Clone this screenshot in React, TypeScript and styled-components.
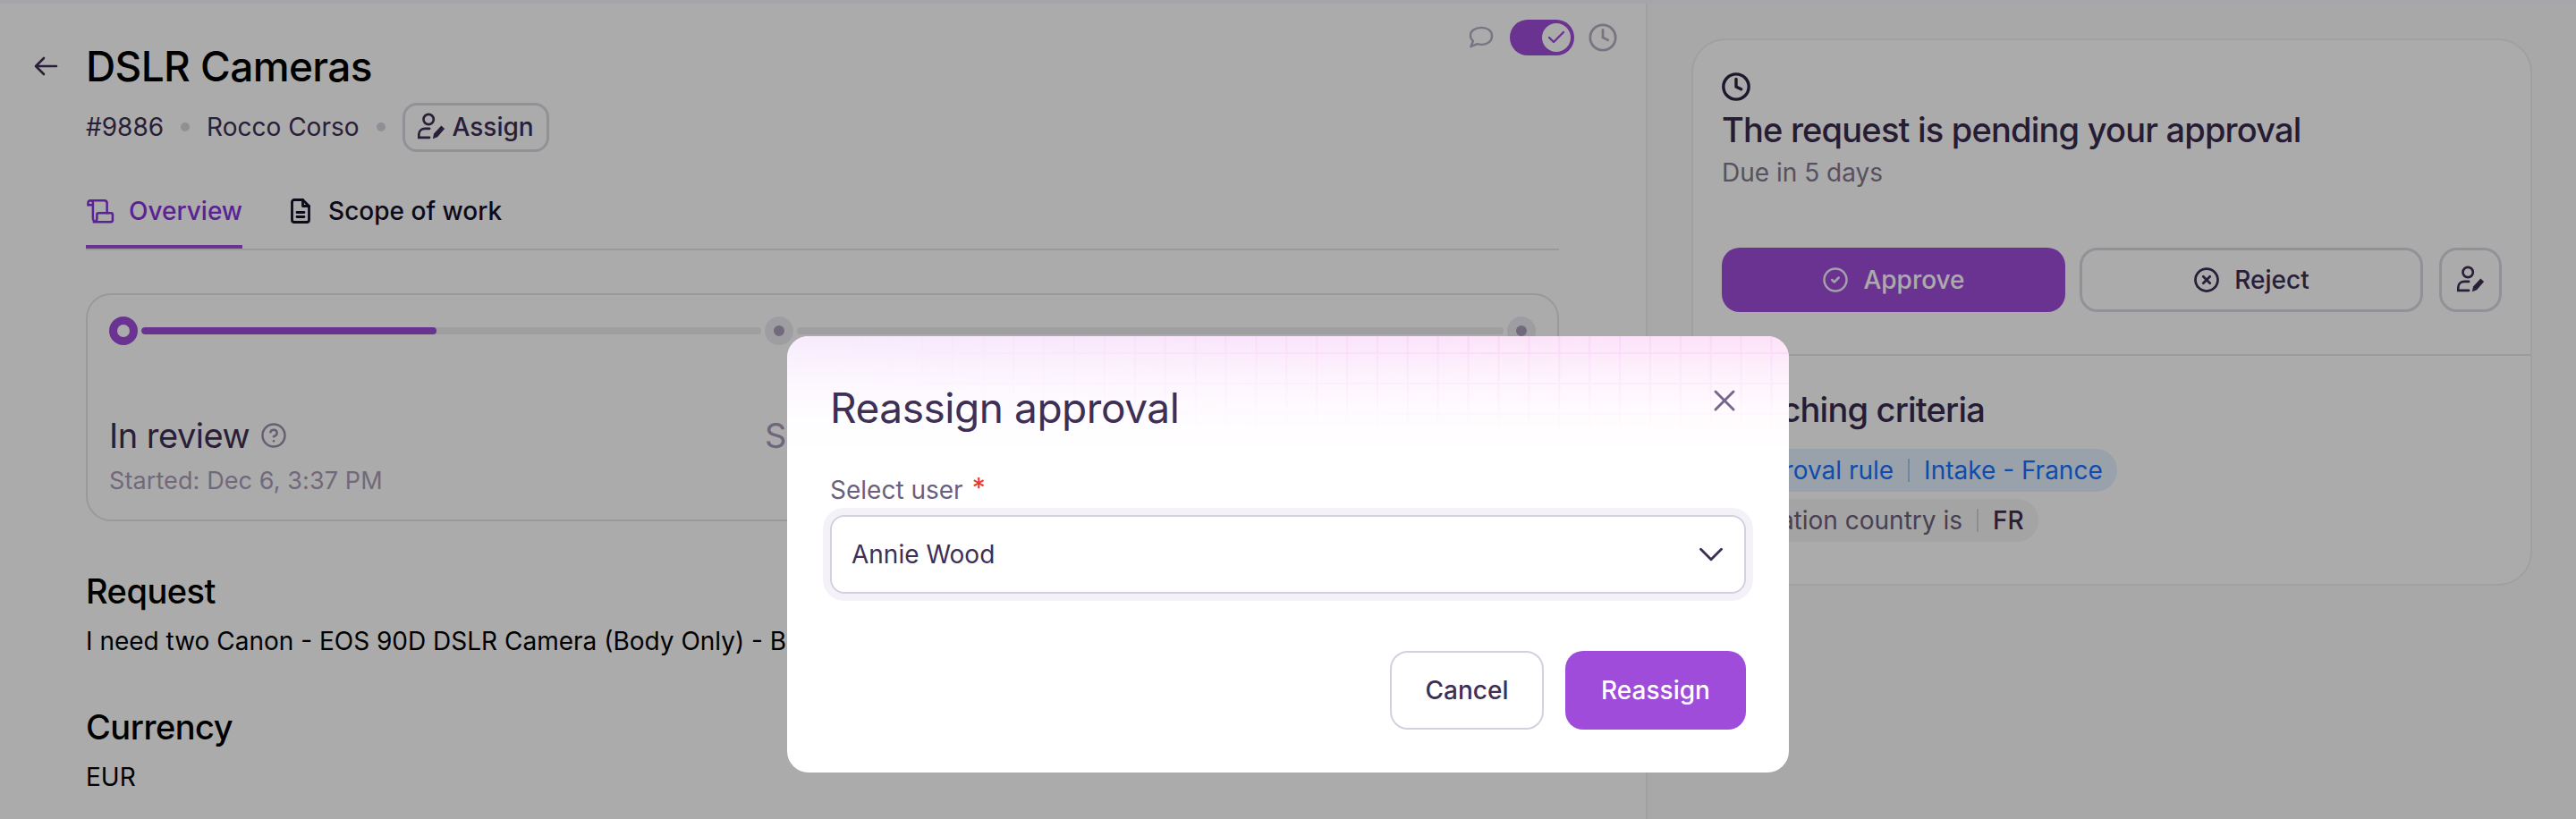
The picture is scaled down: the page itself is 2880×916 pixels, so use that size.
import styled, { createGlobalStyle } from "styled-components";
import { Check, ChevronDown, CircleCheck, CircleHelp, CircleX, Clock, X } from "lucide-react";

const GlobalStyle = createGlobalStyle`
    html, body {
        margin: 0;
        padding: 0;
        background: #fff;
    }
    * {
        box-sizing: border-box;
    }
    body {
        font-family: Inter, "Liberation Sans", sans-serif;
        color: #000;
    }
`;

const Page = styled.div`
    position: relative;
    display: flex;
    width: 2880px;
    height: 916px;
    overflow: hidden;
    padding-top: 4px;
    background: #f9f6fe;
`;

const Main = styled.main`
    width: 1842px;
    flex-shrink: 0;
    padding: 32px 97px 0 38px;
    border-right: 2px solid #f0eef3;
    background: #fff;
`;

const Header = styled.div`
    display: flex;
    align-items: center;
    gap: 31px;
    height: 76px;
    color: #3e2f55;
`;

const Title = styled.h1`
    margin: 0;
    font-size: 46px;
    font-weight: 500;
    letter-spacing: -0.6px;
    color: #000;
`;

const Content = styled.div`
    padding-left: 58px;
`;

const Meta = styled.div`
    display: flex;
    align-items: center;
    height: 56px;
    margin-top: 2px;
    font-size: 28px;
    color: #3e2f55;
`;

const Dot = styled.span`
    width: 10px;
    height: 10px;
    margin: 0 19px;
    border-radius: 50%;
    background: #d8d4df;
`;

const AssignButton = styled.button`
    display: flex;
    align-items: center;
    gap: 7px;
    height: 55px;
    padding: 0 14px 0 12px;
    border: 3px solid #dcd7e3;
    border-radius: 16px;
    background: #fff;
    color: #3e2f55;
    font: 450 28px Inter, sans-serif;
`;

const Tabs = styled.div`
    display: flex;
    gap: 54px;
    height: 110px;
    border-bottom: 2px solid #e8e5ec;
`;

const Tab = styled.div<{ $active?: boolean }>`
    display: flex;
    align-items: center;
    gap: ${(p) => (p.$active ? "16px" : "20px")};
    height: 108px;
    padding-top: 28px;
    border-bottom: 4px solid ${(p) => (p.$active ? "#9e4cd9" : "transparent")};
    color: ${(p) => (p.$active ? "#8734dc" : "#14102a")};
    font-size: 28px;
    font-weight: 500;
`;

const StepCard = styled.section`
    height: 255px;
    margin-top: 48px;
    padding: 24px 24px 0;
    border: 2px solid #e6e3ea;
    border-radius: 28px;
`;

const Track = styled.div`
    display: flex;
    align-items: center;
    gap: 4px;
    height: 32px;
`;

const Node = styled.span<{ $current?: boolean }>`
    flex-shrink: 0;
    width: 32px;
    height: 32px;
    border-style: solid;
    border-radius: 50%;
    border-width: ${(p) => (p.$current ? "9px" : "10px")};
    border-color: ${(p) => (p.$current ? "#9e4cd9" : "#eceaf0")};
    background: ${(p) => (p.$current ? "#fff" : "#aa9db9")};
`;

const Segment = styled.div<{ $width?: number }>`
    flex: ${(p) => (p.$width ? `0 0 ${p.$width}px` : "1")};
    height: 8px;
    border-radius: 4px;
    background: #eeedf0;
    overflow: hidden;
`;

const SegmentFill = styled.div`
    height: 100%;
    border-radius: 4px;
    background: #9e4cd9;
`;

const Steps = styled.div`
    display: grid;
    grid-template-columns: 733px 1fr;
    margin-top: 79px;
`;

const StepName = styled.div<{ $muted?: boolean }>`
    display: flex;
    align-items: center;
    gap: 12px;
    height: 44px;
    font-size: 38px;
    letter-spacing: -0.5px;
    color: ${(p) => (p.$muted ? "#a898ba" : "#3e2f55")};
`;

const HelpIcon = styled(CircleHelp)`
    width: 30px;
    height: 30px;
    color: #9b8fa9;
`;

const StepDate = styled.div`
    margin-top: 12px;
    font-size: 27px;
    line-height: 34px;
    letter-spacing: 0.1px;
    color: #a99db8;
`;

const Section = styled.section`
    margin-top: 56px;
`;

const SectionTitle = styled.h2`
    margin: 0;
    font-size: 38px;
    font-weight: 450;
    letter-spacing: -0.5px;
    line-height: 44px;
`;

const SectionText = styled.p`
    margin: 16px 0 0;
    font-size: 28px;
    line-height: 36px;
    white-space: nowrap;
`;

const Side = styled.aside`
    flex: 1;
    padding: 39px 49px 0 49px;
    background: #fbfbfb;
`;

const ApprovalCard = styled.section`
    height: 612px;
    border: 2px solid #efedf2;
    border-radius: 38px;
    background: #fff;
`;

const ApprovalTop = styled.div`
    height: 353px;
    padding: 35px 32px 0;
    border-bottom: 2px solid #e9e6ed;
`;

const ClockIcon = styled(Clock)`
    display: block;
    width: 34px;
    height: 34px;
    margin-left: -1px;
    color: #2f2340;
`;

const CardTitle = styled.h2`
    margin: 6px 0 0;
    font-size: 38px;
    font-weight: 450;
    line-height: 50px;
    letter-spacing: -0.8px;
    color: #3a2c50;
`;

const CardSubtitle = styled.div`
    margin-top: 5px;
    font-size: 28px;
    line-height: 36px;
    color: #83798f;
`;

const Actions = styled.div`
    display: flex;
    margin-top: 66px;
    gap: 16px;
`;

const ActionButton = styled.button<{ $primary?: boolean; $square?: boolean }>`
    display: flex;
    align-items: center;
    justify-content: center;
    gap: 16px;
    width: ${(p) => (p.$square ? "70px" : "384px")};
    height: 72px;
    margin-left: ${(p) => (p.$square ? "2px" : "0")};
    border: ${(p) => (p.$primary ? "0" : "3px solid #dcd7e3")};
    border-radius: 20px;
    background: ${(p) => (p.$primary ? "#9e4cd9" : "#fff")};
    color: ${(p) => (p.$primary ? "#fff" : "#3e2f55")};
    font: 450 28px Inter, sans-serif;
    svg {
        flex-shrink: 0;
        width: ${(p) => (p.$square ? "34px" : "30px")};
        height: ${(p) => (p.$square ? "34px" : "30px")};
        opacity: ${(p) => (p.$primary ? 0.9 : 1)};
    }
`;

const Criteria = styled.div`
    padding: 35px 32px 0;
`;

const CriteriaTitle = styled(CardTitle)`
    margin: 0;
`;

const Chip = styled.div<{ $blue?: boolean }>`
    display: flex;
    align-items: center;
    width: fit-content;
    height: 48px;
    margin-top: ${(p) => (p.$blue ? "19px" : "8px")};
    padding: 0 16px;
    border-radius: 24px;
    background: ${(p) => (p.$blue ? "#e5f0ff" : "#f5f5f6")};
    color: ${(p) => (p.$blue ? "#1772ff" : "#6d6079")};
    font-size: 28px;
`;

const ChipDivider = styled.span<{ $blue?: boolean }>`
    width: 2px;
    height: 26px;
    margin: 0 16px;
    background: ${(p) => (p.$blue ? "#a6c8f5" : "#d6d2da")};
`;

const ChipValue = styled.span<{ $blue?: boolean }>`
    color: ${(p) => (p.$blue ? "#1772ff" : "#3e2f55")};
    font-weight: ${(p) => (p.$blue ? 400 : 500)};
`;

const ViewSwitch = styled.div`
    position: absolute;
    top: 22px;
    left: 1642px;
    display: flex;
    align-items: center;
    gap: 18px;
    color: #b7adc2;
`;

const Toggle = styled.div`
    display: flex;
    align-items: center;
    justify-content: flex-end;
    width: 72px;
    height: 40px;
    margin-right: -3px;
    padding-right: 4px;
    border-radius: 20px;
    background: #9e4cd9;
`;

const ToggleKnob = styled.span`
    display: flex;
    align-items: center;
    justify-content: center;
    width: 32px;
    height: 32px;
    border-radius: 50%;
    background: #fff;
    color: #9e4cd9;
`;

const Overlay = styled.div`
    position: absolute;
    inset: 0;
    display: flex;
    align-items: flex-start;
    justify-content: center;
    padding-top: 376px;
    background: rgba(0, 0, 0, 0.33);
`;

const Modal = styled.div`
    position: relative;
    width: 1120px;
    height: 488px;
    overflow: hidden;
    border-radius: 24px;
    background: #fff;
`;

const ModalGlow = styled.div`
    position: absolute;
    inset: 0 0 auto 0;
    height: 130px;
    background: linear-gradient(90deg, #f7ebfd 0%, #fae4fb 50%, #fde2f8 100%);
    mask-image: linear-gradient(180deg, #000 0, rgba(0, 0, 0, 0.36) 52px, rgba(0, 0, 0, 0.14) 84px, transparent 130px);
`;

const ModalGrid = styled.div`
    position: absolute;
    inset: 0 0 auto 0;
    height: 110px;
    background-image:
        linear-gradient(90deg, #fad6fa 2px, transparent 2px),
        linear-gradient(180deg, #fad6fa 2px, transparent 2px);
    background-size: 33.9px 33.9px;
    background-position: 15px 18px;
    mask-image: linear-gradient(180deg, #000 0, rgba(0, 0, 0, 0.4) 30px, transparent 100%), linear-gradient(90deg, transparent 5%, #000 70%);
    mask-composite: intersect;
`;

const ModalBody = styled.div`
    position: relative;
    display: flex;
    flex-direction: column;
    height: 100%;
    padding: 50px 48px 48px;
`;

const ModalHeader = styled.div`
    display: flex;
    align-items: flex-start;
    justify-content: space-between;
`;

const ModalTitle = styled.h2`
    margin: 0;
    font-size: 46px;
    font-weight: 400;
    line-height: 60px;
    letter-spacing: -0.45px;
    color: #3e2f55;
`;

const CloseIcon = styled(X)`
    width: 40px;
    height: 40px;
    margin: 2px 4px 0 0;
    color: #76688a;
`;

const FieldLabel = styled.label`
    display: flex;
    align-items: flex-start;
    gap: 10px;
    height: 36px;
    margin-top: 44px;
    font-size: 28px;
    line-height: 36px;
    color: #6c5f7e;
`;

const Required = styled.span`
    color: #f0352b;
    font-size: 30px;
    line-height: 30px;
`;

const SelectRing = styled.div`
    margin: 2px -8px 0;
    padding: 8px;
    border-radius: 24px;
    background: #f4f2f8;
`;

const SelectBox = styled.div`
    display: flex;
    align-items: center;
    justify-content: space-between;
    height: 88px;
    padding: 0 14px 0 22px;
    border: 2px solid #d5d0e0;
    border-radius: 16px;
    background: #fff;
    font-size: 28px;
    color: #3e2f55;
`;

const ChevronIcon = styled(ChevronDown)`
    width: 46px;
    height: 46px;
    color: #3e2f55;
`;

const ModalFooter = styled.div`
    display: flex;
    justify-content: flex-end;
    gap: 24px;
    margin-top: auto;
`;

const ModalButton = styled.button<{ $primary?: boolean }>`
    width: ${(p) => (p.$primary ? "202px" : "172px")};
    height: 88px;
    border: ${(p) => (p.$primary ? "0" : "2px solid #d5d0e0")};
    border-radius: 20px;
    background: ${(p) => (p.$primary ? "#9e4cd9" : "#fff")};
    color: ${(p) => (p.$primary ? "#fff" : "#3e2f55")};
    font: 450 28px Inter, sans-serif;
`;

function BackArrow() {
    return (
        <svg width="27" height="22" viewBox="0 0 27 22" fill="none" stroke="currentColor" strokeWidth="2.6" strokeLinecap="round" strokeLinejoin="round">
            <path d="M2 11h23M11 2l-9 9 9 9" />
        </svg>
    );
}

// person with a pen at the lower right, used on both assign buttons
function AssignIcon() {
    return (
        <svg width="34" height="34" viewBox="0 0 36 36" fill="none">
            <circle cx="15" cy="9" r="6" stroke="currentColor" strokeWidth="2.8" />
            <path d="M16 20H11c-4.500 0-7.500 3-7.500 7v3.500H16" stroke="currentColor" strokeWidth="2.800" strokeLinecap="round" />
            <path d="M20 32l1.200-6L30 16.500l4 3.600L25.500 30z" fill="currentColor" />
        </svg>
    );
}

function ScrollIcon() {
    return (
        <svg width="32" height="27" viewBox="0 0 34 30" fill="none" stroke="currentColor" strokeWidth="2.800" strokeLinecap="round" strokeLinejoin="round">
            <path d="M2 7V4.500C2 2.800 3.200 1.500 5 1.500h17c2 0 3.500 1.500 3.500 3.500v12" />
            <path d="M2 7h6M5 1.500c2 0 3 1.300 3 3V23c0 2.500 1.500 5 4 5h18c1.600 0 2.500-1.200 2.500-2.500V19c0-1.200-.9-2-2-2H15c-1.200 0-2 .8-2 2v5c0 2.500-2 4-4 4" />
        </svg>
    );
}

function DocIcon() {
    return (
        <svg width="22" height="28" viewBox="0 0 22 28" fill="none" stroke="currentColor" strokeWidth="2.800" strokeLinecap="round" strokeLinejoin="round">
            <path d="M13.500 1.500H4C2.600 1.500 1.500 2.600 1.500 4v20c0 1.400 1.100 2.500 2.500 2.500h14c1.400 0 2.500-1.100 2.500-2.500V8.500z" />
            <path d="M13.500 1.500v7h7M7 15.500h8M7 20.500h8" />
        </svg>
    );
}

function ChatIcon() {
    return (
        <svg width="28" height="26" viewBox="0 0 30 28" fill="none" stroke="currentColor" strokeWidth="2.600" strokeLinejoin="round">
            <path d="M15.500 2C8 2 2 6 2 11.500c0 2.500 1.200 4.800 3.300 6.500L2.500 25l7.700-3.300c1.700.5 3.400.8 5.300.8 7 0 12.500-4.500 12.500-10.500S22.500 2 15.500 2z" />
        </svg>
    );
}

export default function App() {
    return (
        <Page>
            <GlobalStyle />
            <Main>
                <Header>
                    <BackArrow />
                    <Title>DSLR Cameras</Title>
                </Header>
                <Content>
                    <Meta>
                        #9886
                        <Dot />
                        Rocco Corso
                        <Dot />
                        <AssignButton>
                            <AssignIcon />
                            Assign
                        </AssignButton>
                    </Meta>
                    <Tabs>
                        <Tab $active>
                            <ScrollIcon />
                            Overview
                        </Tab>
                        <Tab>
                            <DocIcon />
                            Scope of work
                        </Tab>
                    </Tabs>
                    <StepCard>
                        <Track>
                            <Node $current />
                            <Segment $width={693}>
                                <SegmentFill style={{ width: `${(330 / 693) * 100}%` }} />
                            </Segment>
                            <Node />
                            <Segment />
                            <Node />
                        </Track>
                        <Steps>
                            <div>
                                <StepName>
                                    In review
                                    <HelpIcon strokeWidth={2} />
                                </StepName>
                                <StepDate>Started: Dec 6, 3:37 PM</StepDate>
                            </div>
                            <StepName $muted>S</StepName>
                        </Steps>
                    </StepCard>
                    <Section>
                        <SectionTitle>Request</SectionTitle>
                        <SectionText>I need two Canon - EOS 90D DSLR Camera (Body Only) - B</SectionText>
                    </Section>
                    <Section>
                        <SectionTitle>Currency</SectionTitle>
                        <SectionText>EUR</SectionText>
                    </Section>
                </Content>
            </Main>
            <Side>
                <ApprovalCard>
                    <ApprovalTop>
                        <ClockIcon strokeWidth={2.4} />
                        <CardTitle>The request is pending your approval</CardTitle>
                        <CardSubtitle>Due in 5 days</CardSubtitle>
                        <Actions>
                            <ActionButton $primary>
                                <CircleCheck strokeWidth={2} />
                                Approve
                            </ActionButton>
                            <ActionButton>
                                <CircleX strokeWidth={2.2} />
                                Reject
                            </ActionButton>
                            <ActionButton $square>
                                <AssignIcon />
                            </ActionButton>
                        </Actions>
                    </ApprovalTop>
                    <Criteria>
                        <CriteriaTitle>Matching criteria</CriteriaTitle>
                        <Chip $blue>
                            Approval rule
                            <ChipDivider $blue />
                            <ChipValue $blue>Intake - France</ChipValue>
                        </Chip>
                        <Chip>
                            Location country is
                            <ChipDivider />
                            <ChipValue>FR</ChipValue>
                        </Chip>
                    </Criteria>
                </ApprovalCard>
            </Side>
            <ViewSwitch>
                <ChatIcon />
                <Toggle>
                    <ToggleKnob>
                        <Check size={24} strokeWidth={2.4} />
                    </ToggleKnob>
                </Toggle>
                <Clock size={34} strokeWidth={2} />
            </ViewSwitch>
            <Overlay>
                <Modal>
                    <ModalGlow />
                    <ModalGrid />
                    <ModalBody>
                        <ModalHeader>
                            <ModalTitle>Reassign approval</ModalTitle>
                            <CloseIcon strokeWidth={1.8} />
                        </ModalHeader>
                        <FieldLabel>
                            Select user
                            <Required>*</Required>
                        </FieldLabel>
                        <SelectRing>
                            <SelectBox>
                                Annie Wood
                                <ChevronIcon strokeWidth={1.5} />
                            </SelectBox>
                        </SelectRing>
                        <ModalFooter>
                            <ModalButton>Cancel</ModalButton>
                            <ModalButton $primary>Reassign</ModalButton>
                        </ModalFooter>
                    </ModalBody>
                </Modal>
            </Overlay>
        </Page>
    );
}
